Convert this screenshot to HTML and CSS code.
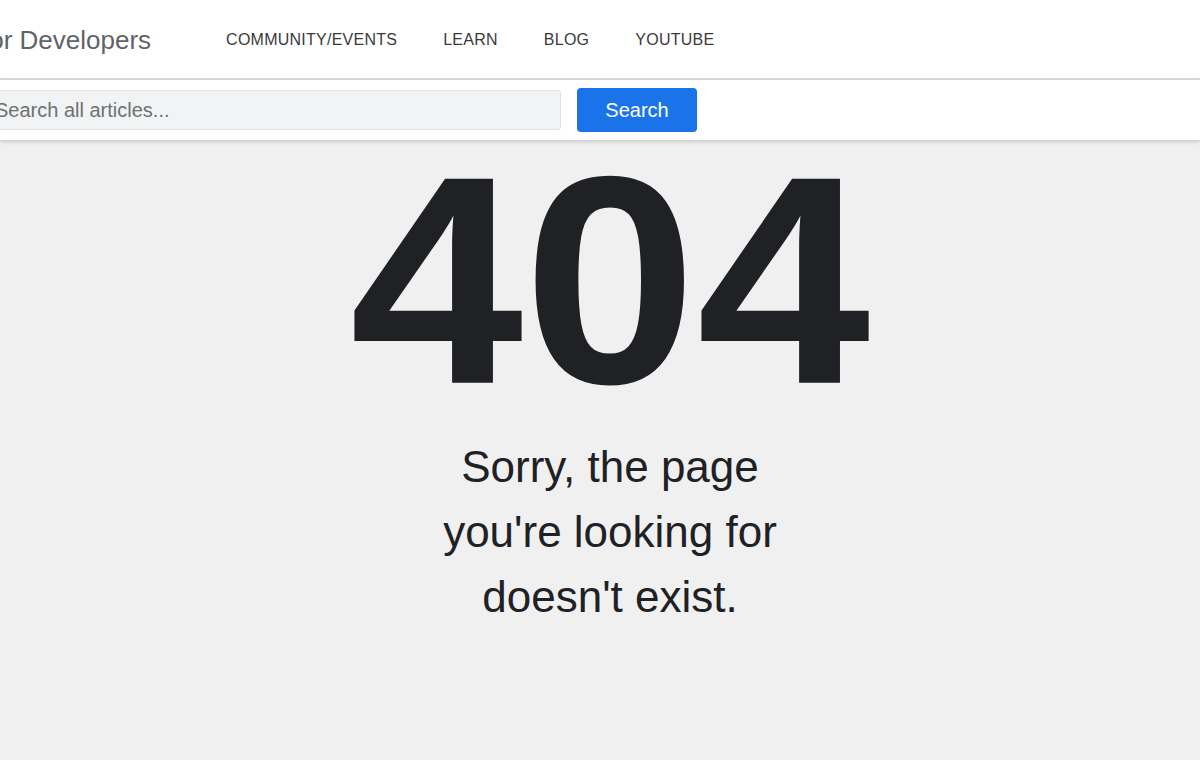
FILE: index.html
```html
<!DOCTYPE html>
<html lang="en">

<head>
    <meta charset="UTF-8">
    <meta name="viewport" content="width=device-width, initial-scale=1">
    <title>Page not found</title>
    <link rel="stylesheet" href="styles.css">
</head>

<body>
    <!-- top navigation -->
    <header class="siteHeader">
        <a class="brand" href="#">for Developers</a>
        <nav>
            <ul class="navList">
                <li><a href="#">Community/Events</a></li>
                <li><a href="#">Learn</a></li>
                <li><a href="#">Blog</a></li>
                <li><a href="#">YouTube</a></li>
            </ul>
        </nav>
    </header>

    <!-- article search -->
    <form class="searchBar" onsubmit="return false">
        <input class="searchInput" type="text" placeholder="Search all articles...">
        <button class="searchButton" type="submit">Search</button>
    </form>

    <!-- not found message -->
    <main class="notFound">
        <h1 class="errorCode">404</h1>
        <p class="errorText">Sorry, the page you're looking for doesn't exist.</p>
    </main>
</body>

</html>
```
FILE: styles.css
```css
/* reset */
body,
h1,
p,
ul,
li {
    margin: 0;
    padding: 0;
}

li {
    list-style: none;
}

a {
    color: inherit;
    text-decoration: none;
}

/* layout */
html {
    height: 100%;
    font-family: 'Liberation Sans', Arial, sans-serif;
}

body {
    min-height: 100%;
    background-color: #F0F0F0;
    overflow-x: hidden;
}

/* header */
.siteHeader {
    display: flex;
    align-items: center;
    height: 78px;
    background-color: #FFFFFF;
    border-bottom: 2px solid #D9D9D9;
    overflow: hidden;
}

.brand {
    flex-shrink: 0;
    margin-left: -18px;
    margin-top: 2px;
    font-size: 26px;
    color: #5F6368;
    white-space: nowrap;
    line-height: 1;
}

.navList {
    display: flex;
    gap: 46px;
    margin-left: 75px;
    margin-top: 1px;
}

.navList a {
    font-size: 16px;
    letter-spacing: 0.25px;
    text-transform: uppercase;
    color: #3A3A3A;
}

/* search */
.searchBar {
    display: flex;
    align-items: center;
    gap: 16px;
    height: 60px;
    margin: 0;
    background-color: #FFFFFF;
    box-shadow: 0 2px 4px rgba(0, 0, 0, 0.16);
    position: relative;
}

.searchInput {
    box-sizing: border-box;
    width: 581px;
    height: 40px;
    margin-left: -20px;
    padding: 0 14px;
    border: 1px solid #E2E2E2;
    border-radius: 3px;
    background-color: #F1F3F4;
    font-family: inherit;
    font-size: 20px;
    color: #333333;
}

.searchInput::placeholder {
    color: #707070;
}

.searchButton {
    width: 120px;
    height: 44px;
    border: none;
    border-radius: 4px;
    background-color: #1A73E8;
    font-family: inherit;
    font-size: 20px;
    color: #FFFFFF;
}

/* 404 block */
.notFound {
    display: flex;
    flex-direction: column;
    align-items: center;
    padding: 16px 0 0 20px;
    color: #202124;
}

.errorCode {
    font-size: 312px;
    font-weight: 700;
    line-height: 0.8;
    transform: scaleY(0.95);
}

.errorText {
    max-width: 360px;
    margin-top: 28px;
    font-size: 44px;
    line-height: 65px;
    text-align: center;
}
```
